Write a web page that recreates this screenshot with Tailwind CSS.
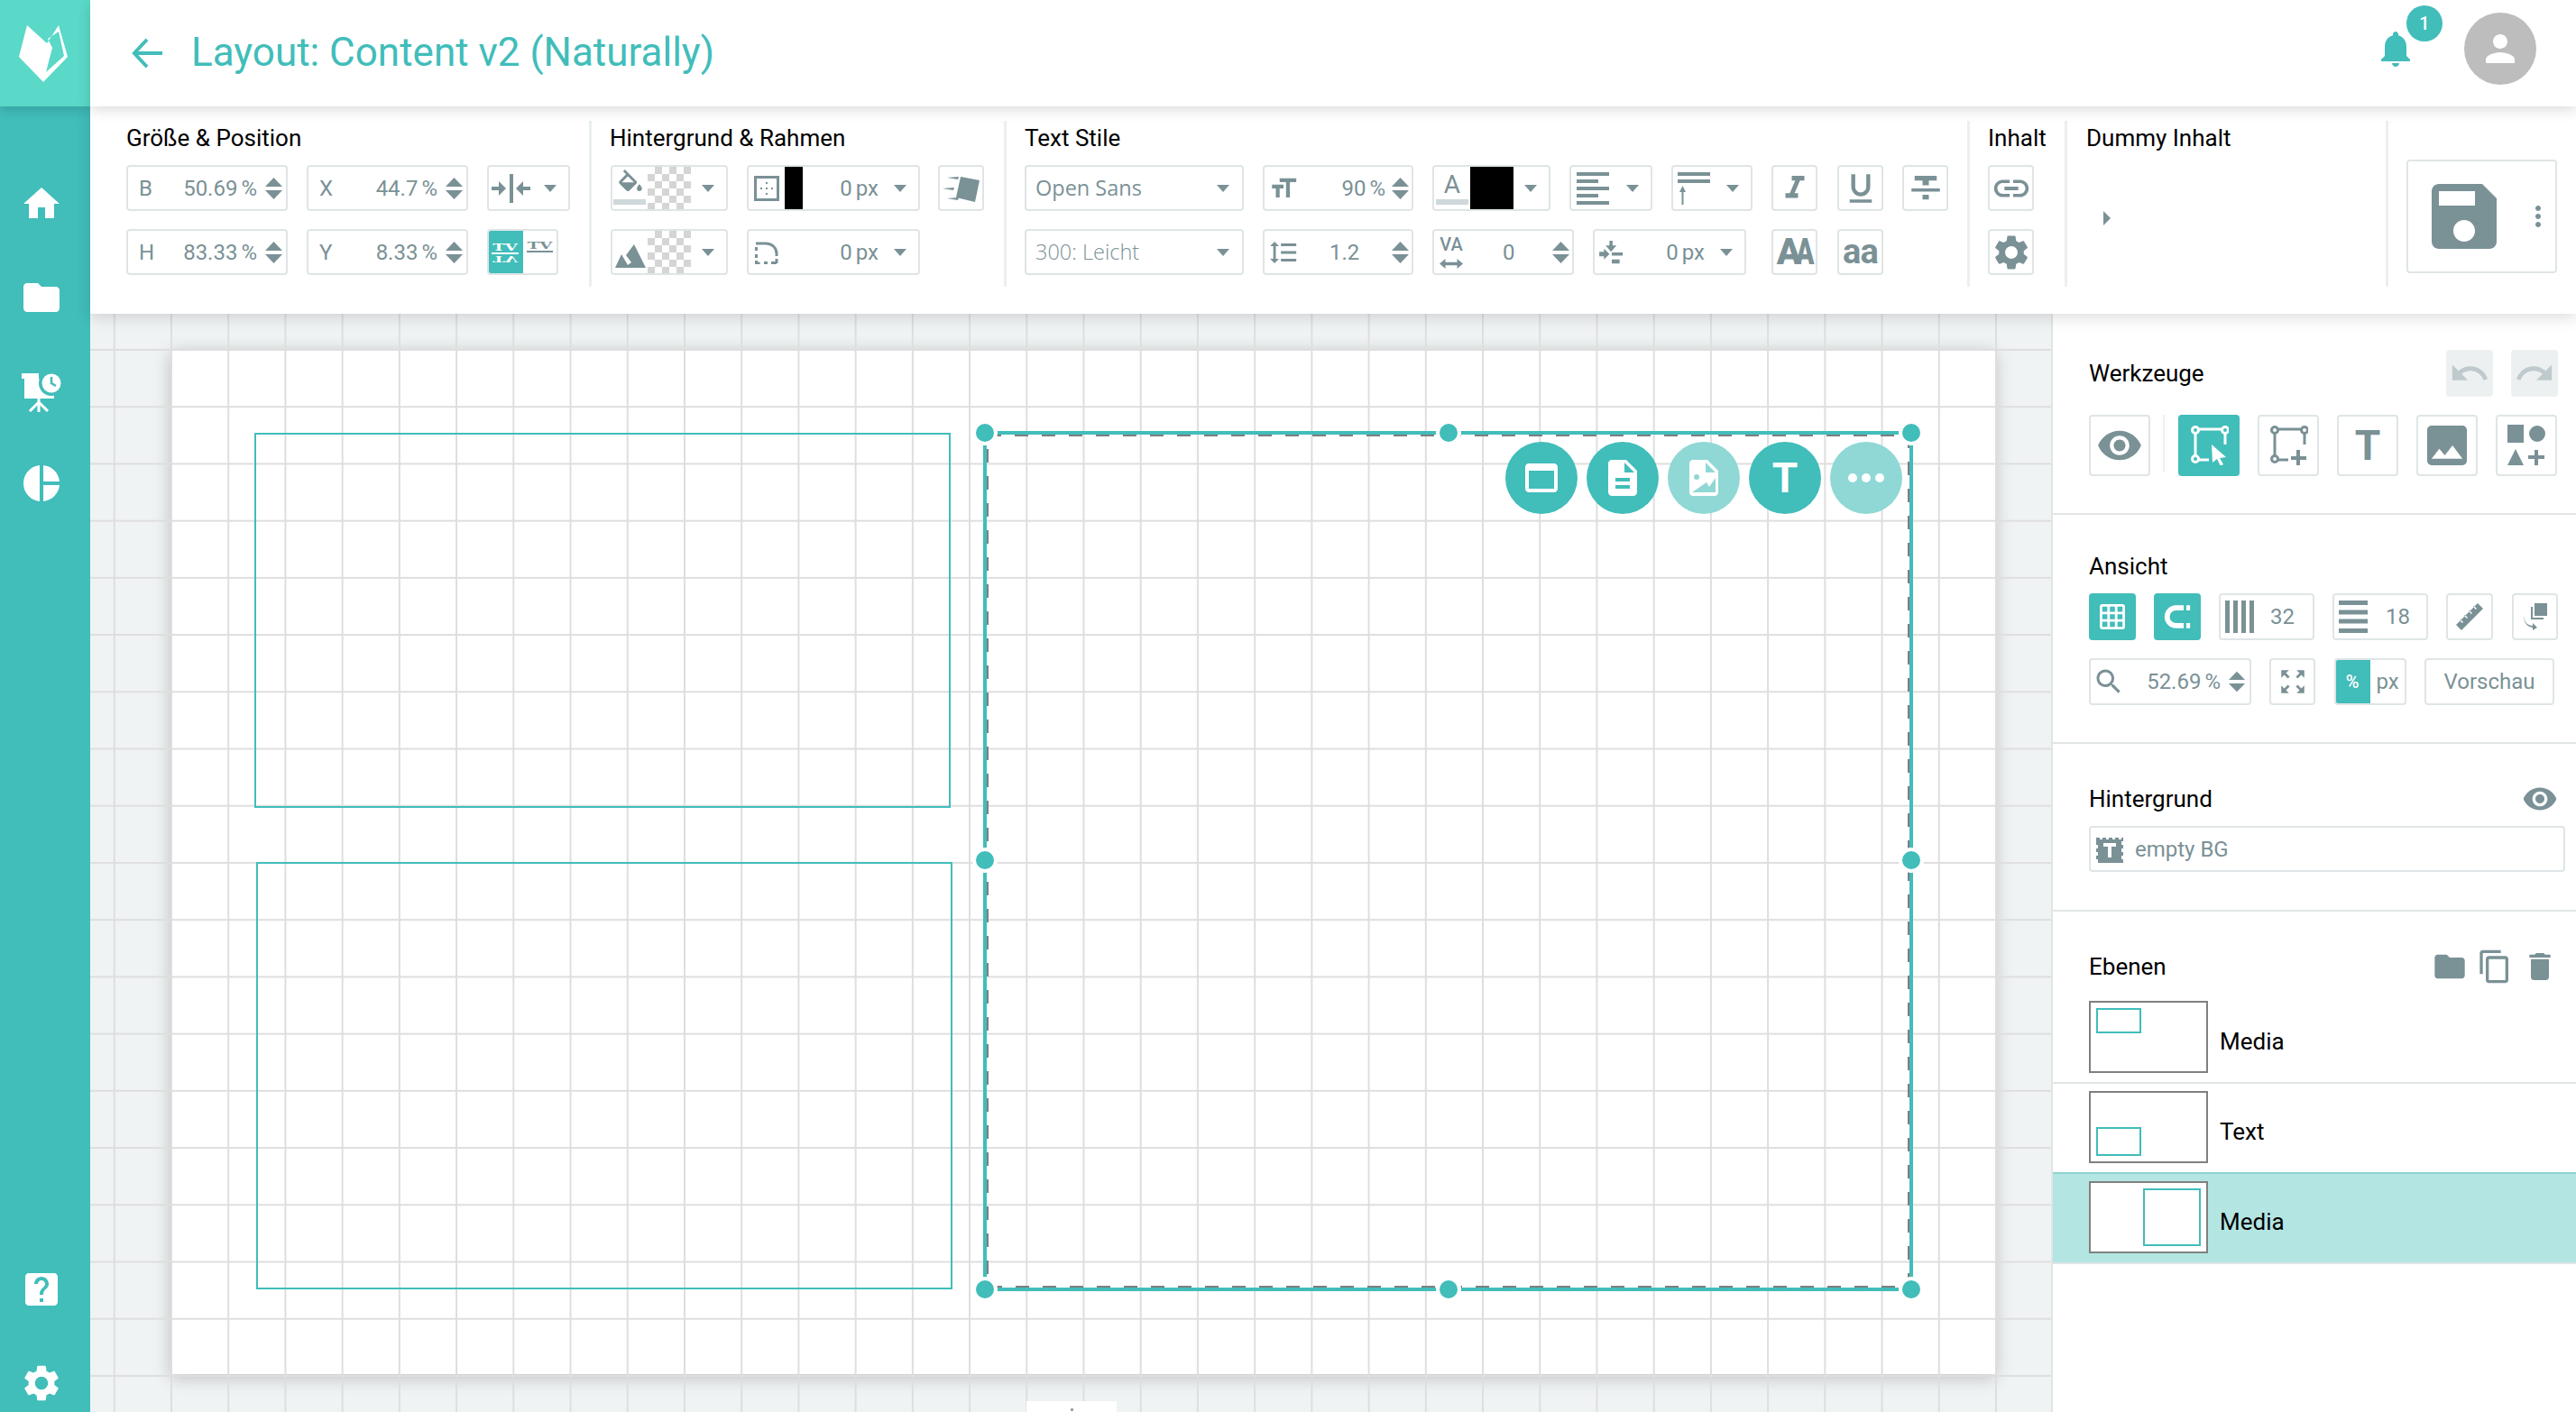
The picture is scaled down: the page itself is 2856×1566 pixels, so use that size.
<!DOCTYPE html>
<html lang="de">
<head>
<meta charset="UTF-8" />
<title>Layout: Content v2 (Naturally)</title>
<script src="https://cdn.jsdelivr.net/npm/@tailwindcss/browser@4"></script>
</head>
<body class="font-['Roboto',sans-serif] bg-white overflow-hidden">

<!-- icon sprite -->
<svg class="hidden">
	<symbol id="caret" viewBox="0 0 14 8"><path d="M0 0h14L7 8z" /></symbol>
	<symbol id="spin" viewBox="0 0 19 24"><path d="M9.500 0L19 10H0zM0 14h19L9.500 24z" /></symbol>
	<symbol id="gear" viewBox="0 0 24 24"><path d="M19.140 12.940c.04-.3.06-.61.06-.94 0-.32-.02-.64-.07-.94l2.030-1.580c.18-.14.23-.41.12-.61l-1.920-3.320c-.12-.22-.37-.29-.59-.22l-2.390.96c-.5-.38-1.030-.7-1.620-.94l-.36-2.540c-.04-.24-.24-.41-.48-.41h-3.840c-.24 0-.43.17-.47.41l-.36 2.540c-.59.24-1.130.57-1.620.94l-2.390-.96c-.22-.08-.47 0-.59.22L2.740 8.870c-.12.21-.08.47.12.61l2.030 1.580c-.05.3-.09.63-.09.94s.02.64.07.94l-2.030 1.580c-.18.14-.23.41-.12.61l1.920 3.320c.12.22.37.29.59.22l2.390-.96c.5.38 1.030.7 1.620.94l.36 2.540c.05.24.24.41.48.41h3.840c.24 0 .44-.17.47-.41l.36-2.540c.59-.24 1.130-.56 1.620-.94l2.390.96c.22.08.47 0 .59-.22l1.920-3.320c.12-.22.07-.47-.12-.61l-2.010-1.580zM12 15.600c-1.980 0-3.600-1.620-3.600-3.600s1.620-3.600 3.600-3.600 3.600 1.620 3.600 3.600-1.620 3.600-3.600 3.600z" /></symbol>
	<symbol id="eye" viewBox="0 0 24 24"><path d="M12 4.500C7 4.500 2.730 7.610 1 12c1.730 4.390 6 7.500 11 7.500s9.270-3.110 11-7.500c-1.730-4.390-6-7.500-11-7.500zM12 17c-2.760 0-5-2.240-5-5s2.240-5 5-5 5 2.240 5 5-2.240 5-5 5zm0-8c-1.660 0-3 1.340-3 3s1.340 3 3 3 3-1.340 3-3-1.340-3-3-3z" /></symbol>
	<symbol id="folder" viewBox="0 0 24 24"><path d="M10 4H4c-1.100 0-1.990.9-1.990 2L2 18c0 1.100.9 2 2 2h16c1.100 0 2-.9 2-2V8c0-1.100-.9-2-2-2h-8l-2-2z" /></symbol>
</svg>

<div class="flex w-[2856px] h-[1566px]">

	<!-- left nav -->
	<aside class="relative z-20 w-[100px] h-full flex flex-col items-start bg-[#41bdba] text-white">
		<div class="w-[100px] h-[118px] bg-[#5ad8c8] shadow-[0_4px_12px_rgba(0,0,0,0.15)] flex items-center">
			<svg class="ml-[21px] w-[54px] h-[63px]" viewBox="0 0 54 63" fill="#fff"><path fill-rule="evenodd" d="M9 0L31 20 44 0 54 35 27 63 0 35zM32 15L44 7 50 34 30 52 37 25z" /></svg>
		</div>
		<svg class="ml-[22px] mt-[84px] w-[48px] h-[48px]" viewBox="0 0 24 24" fill="currentColor"><path d="M10 20v-6h4v6h5v-8h3L12 3 2 12h3v8z" /></svg>
		<svg class="ml-[22px] mt-[56px] w-[48px] h-[48px] fill-current"><use href="#folder" /></svg>
		<svg class="ml-[24px] mt-[59px] w-[44px] h-[44px]" viewBox="0 0 44 44">
			<path fill="#fff" d="M0 1h19v6H0zM3 7h33v22H3z" />
			<circle cx="33" cy="12" r="14" fill="#41bdba" />
			<circle cx="33" cy="12" r="10.500" fill="#fff" />
			<path d="M33 5v7l5 3" fill="none" stroke="#41bdba" stroke-width="2.500" />
			<path d="M19 29v15M19 33L9 43M19 33l10 10" fill="none" stroke="#fff" stroke-width="3" />
		</svg>
		<svg class="ml-[22px] mt-[55px] w-[48px] h-[48px]" viewBox="0 0 24 24" fill="currentColor"><path d="M11 2v20c-5.070-.5-9-4.790-9-10s3.930-9.500 9-10zm2.030 0v8.990H22c-.47-4.740-4.240-8.520-8.970-8.990zm0 11.010V22c4.740-.47 8.500-4.250 8.970-8.990h-8.970z" /></svg>
		<svg class="ml-[22px] mt-auto w-[48px] h-[48px]" viewBox="0 0 24 24" fill="currentColor"><path d="M19 3H5c-1.110 0-2 .9-2 2v14c0 1.100.89 2 2 2h14c1.100 0 2-.9 2-2V5c0-1.100-.9-2-2-2zm-6 16h-2v-2h2v2zm2.070-7.750l-.9.92C13.450 12.900 13 13.500 13 15h-2v-.5c0-1.100.45-2.100 1.170-2.830l1.240-1.260c.37-.36.59-.86.59-1.410 0-1.100-.9-2-2-2s-2 .9-2 2H8c0-2.210 1.790-4 4-4s4 1.790 4 4c0 .88-.36 1.680-.93 2.250z" /></svg>
		<svg class="ml-[22px] mt-[56px] mb-[8px] w-[48px] h-[48px] fill-current"><use href="#gear" /></svg>
	</aside>

	<div class="flex flex-col w-[2756px] h-full">

		<!-- title bar -->
		<header class="relative z-30 h-[118px] bg-white shadow-[0_4px_14px_rgba(0,0,0,0.14)] flex items-center text-[#41bdba]">
			<svg class="ml-[46px] w-[34px] h-[34px]" viewBox="0 0 36 36" fill="none" stroke="currentColor" stroke-width="4"><path d="M36 18H3M18 2L3 18l15 16" /></svg>
			<h1 class="ml-[32px] text-[44px] leading-none mb-[2px]">Layout: Content v2 (Naturally)</h1>
			<div class="relative ml-auto mr-[44px] self-start mt-[14px] flex items-start">
				<svg class="w-[48px] h-[48px] mr-[52px] mt-[16px]" viewBox="0 0 24 24" fill="currentColor"><path d="M12 22c1.100 0 2-.9 2-2h-4c0 1.100.89 2 2 2zm6-6v-5c0-3.070-1.640-5.640-4.500-6.320V4c0-.83-.67-1.500-1.500-1.500s-1.500.67-1.500 1.500v.68C7.630 5.360 6 7.920 6 11v5l-2 2v1h16v-1l-2-2z" /></svg>
				<span class="absolute left-[36px] top-[-8px] w-[40px] h-[40px] rounded-full bg-[#41bdba] text-white text-[20px] font-medium flex items-center justify-center">1</span>
				<span class="w-[80px] h-[80px] rounded-full bg-[#bdbdbd] flex items-center justify-center">
					<svg class="w-[48px] h-[48px]" viewBox="0 0 24 24" fill="#fff"><path d="M12 12c2.210 0 4-1.790 4-4s-1.790-4-4-4-4 1.790-4 4 1.790 4 4 4zm0 2c-2.670 0-8 1.340-8 4v2h16v-2c0-2.660-5.330-4-8-4z" /></svg>
				</span>
			</div>
		</header>

		<!-- property toolbar -->
		<section class="relative z-20 h-[230px] bg-white shadow-[0_4px_16px_rgba(0,0,0,0.14)] flex items-start pt-[16px] text-[#7a9196] fill-[#7a9196]">

			<!-- size & position -->
			<div class="w-[556px] h-[184px] pl-[40px] border-r-[3px] border-[#ecefef]">
				<h2 class="text-[26px] leading-[38px] mb-[11px] text-black">Größe &amp; Position</h2>
				<div class="flex gap-[21px] text-[24px]">
					<div class="w-[179px] h-[51px] flex items-center pl-[12px] pr-[4px] border-2 border-[#dfe5e6] rounded-[4px]"><span>B</span><span class="ml-auto">50.69<span class="ml-[4px]">%</span></span><svg class="ml-[9px] w-[19px] h-[24px]"><use href="#spin" /></svg></div>
					<div class="w-[179px] h-[51px] flex items-center pl-[12px] pr-[4px] border-2 border-[#dfe5e6] rounded-[4px]"><span>X</span><span class="ml-auto">44.7<span class="ml-[4px]">%</span></span><svg class="ml-[9px] w-[19px] h-[24px]"><use href="#spin" /></svg></div>
					<div class="w-[92px] h-[51px] flex items-center pl-[3px] border-2 border-[#dfe5e6] rounded-[4px]">
						<svg class="w-[43px] h-[32px]" viewBox="0 0 43 32"><path d="M20 0h4v32h-4zM0 14h8V8l8 8-8 8v-6H0zM43 14h-8V8l-8 8 8 8v-6h8z" /></svg>
						<svg class="ml-[15px] w-[14px] h-[8px]"><use href="#caret" /></svg>
					</div>
				</div>
				<div class="flex gap-[21px] mt-[20px] text-[24px]">
					<div class="w-[179px] h-[51px] flex items-center pl-[12px] pr-[4px] border-2 border-[#dfe5e6] rounded-[4px]"><span>H</span><span class="ml-auto">83.33<span class="ml-[4px]">%</span></span><svg class="ml-[9px] w-[19px] h-[24px]"><use href="#spin" /></svg></div>
					<div class="w-[179px] h-[51px] flex items-center pl-[12px] pr-[4px] border-2 border-[#dfe5e6] rounded-[4px]"><span>Y</span><span class="ml-auto">8.33<span class="ml-[4px]">%</span></span><svg class="ml-[9px] w-[19px] h-[24px]"><use href="#spin" /></svg></div>
					<div class="w-[79px] h-[51px] flex rounded-[4px] overflow-hidden border-2 border-[#dfe5e6] font-['DejaVu_Serif',serif] font-bold text-[18px] leading-none">
						<span class="w-[40px] -m-[2px] mr-0 bg-[#41bdba] text-white flex flex-col items-center justify-center">
							<span class="h-[14px] w-[30px] flex items-end justify-center border-b-2 border-white"><span class="scale-y-[0.6] origin-bottom">TV</span></span>
							<span class="h-[10px] w-[30px] flex items-start justify-center"><span class="-scale-y-50 origin-center -mt-[4px]">TV</span></span>
						</span>
						<span class="flex-1 flex items-start justify-center pt-[8px]"><span class="h-[16px] w-[29px] flex items-end justify-center border-b-2 border-[#7a9196]"><span class="scale-y-[0.6] origin-bottom">TV</span></span></span>
					</div>
				</div>
			</div>

			<!-- background & border -->
			<div class="w-[460px] h-[184px] pl-[21px] border-r-[3px] border-[#ecefef]">
				<h2 class="-ml-px text-[26px] leading-[38px] mb-[11px] text-black">Hintergrund &amp; Rahmen</h2>
				<div class="flex text-[24px]">
					<div class="relative w-[130px] h-[51px] flex items-center border-2 border-[#dfe5e6] rounded-[4px]">
						<svg class="ml-[3px] w-[34px] h-[34px] mb-[8px]" viewBox="0 0 24 24"><path d="M16.560 8.940L7.620 0 6.210 1.410l2.380 2.380-5.150 5.150c-.59.59-.59 1.540 0 2.120l5.500 5.500c.29.29.68.44 1.060.44s.77-.15 1.060-.44l5.500-5.500c.59-.58.59-1.530 0-2.120zM5.210 10L10 5.210 14.790 10H5.210zM19 11.500s-2 2.170-2 3.500c0 1.100.9 2 2 2s2-.9 2-2c0-1.330-2-3.500-2-3.500z" /></svg>
						<span class="absolute left-[1px] bottom-[5px] w-[36px] h-[6px] bg-[#cfd8da]"></span>
						<span class="self-stretch ml-[2px] w-[48px] bg-[conic-gradient(#d5d5d5_25%,#fff_0_50%,#d5d5d5_0_75%,#fff_0)] bg-[size:16px_16px]"></span>
						<svg class="ml-[12px] w-[14px] h-[8px]"><use href="#caret" /></svg>
					</div>
					<div class="ml-[21px] w-[192px] h-[51px] flex items-center border-2 border-[#dfe5e6] rounded-[4px]">
						<svg class="ml-[6px] w-[28px] h-[28px]" viewBox="0 0 28 28"><path fill-rule="evenodd" d="M0 0h28v28H0zM3 3v22h22V3zM13 7h2v2h-2zM13 13h2v2h-2zM13 19h2v2h-2zM7 13h2v2H7zM19 13h2v2h-2z" /></svg>
						<span class="self-stretch ml-[6px] w-[20px] bg-black"></span>
						<span class="ml-auto">0<span class="ml-[4px]">px</span></span>
						<svg class="ml-[17px] mr-[13px] w-[14px] h-[8px]"><use href="#caret" /></svg>
					</div>
					<div class="ml-[20px] w-[51px] h-[51px] flex items-center justify-center border-2 border-[#dfe5e6] rounded-[4px]">
						<svg class="w-[44px] h-[34px]" viewBox="0 0 44 34"><path d="M21 4l21 4-5 24-21-5zM6 5l13-1-1 3zM1 17l13-1-1 3zM6 28l13-1-1 3z" /></svg>
					</div>
				</div>
				<div class="flex mt-[20px] text-[24px]">
					<div class="w-[130px] h-[51px] flex items-center border-2 border-[#dfe5e6] rounded-[4px]">
						<svg class="ml-[3px] w-[34px] h-[26px] mt-[8px]" viewBox="0 0 34 26"><path d="M21 0L12 12l6 8-4 3L7 11 0 26h34z" /></svg>
						<span class="self-stretch ml-[2px] w-[48px] bg-[conic-gradient(#d5d5d5_25%,#fff_0_50%,#d5d5d5_0_75%,#fff_0)] bg-[size:16px_16px]"></span>
						<svg class="ml-[12px] w-[14px] h-[8px]"><use href="#caret" /></svg>
					</div>
					<div class="ml-[21px] w-[192px] h-[51px] flex items-center border-2 border-[#dfe5e6] rounded-[4px]">
						<svg class="ml-[7px] w-[26px] h-[26px]" viewBox="0 0 26 26" fill="none" stroke="#7a9196" stroke-width="3"><path d="M1 3h11c7 0 12 5 12 11v3" /><path d="M1.500 7v4M1.500 15v4M1.500 22v3h4M10 24.500h4M18 24.500h6M24 20v5" /></svg>
						<span class="ml-auto">0<span class="ml-[4px]">px</span></span>
						<svg class="ml-[17px] mr-[13px] w-[14px] h-[8px]"><use href="#caret" /></svg>
					</div>
				</div>
			</div>

			<!-- text style -->
			<div class="w-[1068px] h-[184px] pl-[20px] border-r-[3px] border-[#ecefef]">
				<h2 class="text-[26px] leading-[38px] mb-[11px] text-black">Text Stile</h2>
				<div class="flex h-[51px] text-[24px]">
					<div class="w-[243px] flex items-center pl-[10px] border-2 border-[#dfe5e6] rounded-[4px] font-['Open_Sans',sans-serif] text-[23.500px]"><span>Open Sans</span><svg class="ml-auto mr-[14px] w-[14px] h-[8px]"><use href="#caret" /></svg></div>
					<div class="ml-[21px] w-[167px] flex items-center border-2 border-[#dfe5e6] rounded-[4px]">
						<svg class="ml-[4px] w-[34px] h-[36px]" viewBox="0 0 24 24"><path d="M9 4v3h5v12h3V7h5V4H9zm-6 8h3v7h3v-7h3V9H3v3z" /></svg>
						<span class="ml-auto">90<span class="ml-[4px]">%</span></span>
						<svg class="ml-[7px] mr-[3px] w-[19px] h-[24px]"><use href="#spin" /></svg>
					</div>
					<div class="relative ml-[21px] w-[131px] flex items-center border-2 border-[#dfe5e6] rounded-[4px]">
						<span class="w-[40px] text-center mb-[8px] text-[28px]">A</span>
						<span class="absolute left-[2px] bottom-[5px] w-[36px] h-[6px] bg-[#cfd8da]"></span>
						<span class="self-stretch w-[48px] bg-black"></span>
						<svg class="ml-[12px] w-[14px] h-[8px]"><use href="#caret" /></svg>
					</div>
					<div class="ml-[21px] w-[92px] flex items-center border-2 border-[#dfe5e6] rounded-[4px]">
						<svg class="ml-[6px] w-[36px] h-[36px]" viewBox="0 0 36 36"><path d="M0 0h36v4H0zM0 8h24v4H0zM0 16h36v4H0zM0 24h24v4H0zM0 32h36v4H0z" /></svg>
						<svg class="ml-[19px] w-[14px] h-[8px]"><use href="#caret" /></svg>
					</div>
					<div class="ml-[21px] w-[90px] flex items-center border-2 border-[#dfe5e6] rounded-[4px]">
						<svg class="ml-[5px] w-[36px] h-[36px]" viewBox="0 0 36 36"><path d="M0 0h36v4H0zM0 8h36v4H0zM2 22l3.500-7 3.500 7H6.500v14h-2V22z" /></svg>
						<svg class="ml-[18px] w-[14px] h-[8px]"><use href="#caret" /></svg>
					</div>
					<div class="ml-[21px] w-[51px] flex items-center justify-center border-2 border-[#dfe5e6] rounded-[4px]"><svg class="w-[42px] h-[42px]" viewBox="0 0 24 24"><path d="M10 4v3h2.210l-3.420 8H6v3h8v-3h-2.210l3.420-8H18V4z" /></svg></div>
					<div class="ml-[22px] w-[51px] flex items-center justify-center border-2 border-[#dfe5e6] rounded-[4px]"><svg class="w-[42px] h-[42px]" viewBox="0 0 24 24"><path d="M12 17c3.310 0 6-2.690 6-6V3h-2.500v8c0 1.930-1.570 3.500-3.500 3.500S8.500 12.930 8.500 11V3H6v8c0 3.310 2.690 6 6 6zm-7 2v2h14v-2H5z" /></svg></div>
					<div class="ml-[21px] w-[51px] flex items-center justify-center border-2 border-[#dfe5e6] rounded-[4px]"><svg class="w-[42px] h-[42px]" viewBox="0 0 24 24"><path d="M10 19h4v-3h-4v3zM5 4v3h5v3h4V7h5V4H5zM3 14h18v-2H3v2z" /></svg></div>
				</div>
				<div class="flex h-[51px] mt-[20px] text-[24px]">
					<div class="w-[243px] flex items-center pl-[10px] border-2 border-[#dfe5e6] rounded-[4px] font-['Open_Sans',sans-serif] font-light text-[23.500px]"><span>300: Leicht</span><svg class="ml-auto mr-[14px] w-[14px] h-[8px]"><use href="#caret" /></svg></div>
					<div class="ml-[21px] w-[167px] flex items-center border-2 border-[#dfe5e6] rounded-[4px]">
						<svg class="ml-[4px] w-[34px] h-[36px]" viewBox="0 0 24 24"><path d="M6 7h2.500L5 3.500 1.500 7H4v10H1.500L5 20.500 8.500 17H6V7zm4-2v2h12V5H10zm0 14h12v-2H10v2zm0-6h12v-2H10v2z" /></svg>
						<span class="ml-[34px]">1.2</span>
						<svg class="ml-auto mr-[3px] w-[19px] h-[24px]"><use href="#spin" /></svg>
					</div>
					<div class="ml-[21px] w-[157px] flex items-center border-2 border-[#dfe5e6] rounded-[4px]">
						<span class="relative ml-[5px] w-[28px] h-[38px] text-[20px] leading-[20px] font-medium text-center">VA
							<svg class="absolute left-0 bottom-0 w-[28px] h-[13px]" viewBox="0 0 28 14"><path d="M0 7l7-6v4h14V1l7 6-7 6V9H7v4z" /></svg>
						</span>
						<span class="ml-[43px]">0</span>
						<svg class="ml-auto mr-[3px] w-[19px] h-[24px]"><use href="#spin" /></svg>
					</div>
					<div class="ml-[21px] w-[170px] flex items-center border-2 border-[#dfe5e6] rounded-[4px]">
						<svg class="ml-[5px] w-[28px] h-[26px]" viewBox="0 0 32 30"><path d="M13 0h4v6h5l-7 8-7-8h5zM0 14h6v-4l7 7-7 7v-4H0zM16 15h14v4H16zM16 24h10v5H16z" /></svg>
						<span class="ml-auto">0<span class="ml-[4px]">px</span></span>
						<svg class="ml-[17px] mr-[13px] w-[14px] h-[8px]"><use href="#caret" /></svg>
					</div>
					<div class="ml-[28px] w-[51px] flex items-center justify-center border-2 border-[#dfe5e6] rounded-[4px] font-black text-[40px] tracking-[-0.14em] leading-none"><span>A</span><span class="scale-x-75 origin-left w-[18px]">A</span></div>
					<div class="ml-[22px] w-[51px] flex items-center justify-center border-2 border-[#dfe5e6] rounded-[4px] font-bold text-[38px] tracking-[-0.02em] leading-none pb-[2px]">aa</div>
				</div>
			</div>

			<!-- content -->
			<div class="w-[108px] h-[184px] pl-[20px] border-r-[3px] border-[#ecefef]">
				<h2 class="text-[26px] leading-[38px] mb-[11px] text-black">Inhalt</h2>
				<div class="w-[51px] h-[51px] flex items-center justify-center border-2 border-[#dfe5e6] rounded-[4px]"><svg class="w-[46px] h-[46px]" viewBox="0 0 24 24"><path d="M3.900 12c0-1.710 1.390-3.100 3.100-3.100h4V7H7c-2.760 0-5 2.240-5 5s2.240 5 5 5h4v-1.900H7c-1.710 0-3.100-1.390-3.100-3.100zM8 13h8v-2H8v2zm9-6h-4v1.900h4c1.710 0 3.100 1.390 3.100 3.100s-1.390 3.100-3.100 3.100h-4V17h4c2.760 0 5-2.240 5-5s-2.240-5-5-5z" /></svg></div>
				<div class="mt-[20px] w-[51px] h-[51px] flex items-center justify-center border-2 border-[#dfe5e6] rounded-[4px]"><svg class="w-[46px] h-[46px]"><use href="#gear" /></svg></div>
			</div>

			<!-- dummy content -->
			<div class="w-[356px] h-[184px] pl-[22px] border-r-[3px] border-[#ecefef]">
				<h2 class="-ml-px text-[26px] leading-[38px] mb-[11px] text-black">Dummy Inhalt</h2>
				<svg class="ml-[18px] mt-[62px] w-[8px] h-[16px]" viewBox="0 0 8 16"><path d="M0 0l8 8-8 8z" /></svg>
			</div>

			<!-- save -->
			<div class="w-[167px] h-[126px] ml-[20px] mt-[43px] flex items-center border-2 border-[#dfe5e6] rounded-[4px]">
				<svg class="ml-[14px] w-[96px] h-[96px]" viewBox="0 0 24 24"><path d="M17 3H5c-1.110 0-2 .9-2 2v14c0 1.100.89 2 2 2h14c1.100 0 2-.9 2-2V7l-4-4zm-5 16c-1.660 0-3-1.340-3-3s1.340-3 3-3 3 1.340 3 3-1.340 3-3 3zm3-10H5V5h10v4z" /></svg>
				<svg class="ml-[16px] w-[36px] h-[36px]" viewBox="0 0 24 24"><path d="M12 8c1.100 0 2-.9 2-2s-.9-2-2-2-2 .9-2 2 .9 2 2 2zm0 2c-1.100 0-2 .9-2 2s.9 2 2 2 2-.9 2-2-.9-2-2-2zm0 6c-1.100 0-2 .9-2 2s.9 2 2 2 2-.9 2-2-.9-2-2-2z" /></svg>
			</div>
		</section>

		<div class="flex flex-1 min-h-0">

			<!-- canvas -->
			<main class="relative w-[2174px] h-[1218px] overflow-hidden bg-[#f0f3f4]">
				<div class="absolute left-[89px] top-[39px] w-[2023px] h-[1137px] bg-white shadow-[0_4px_18px_rgba(0,0,0,0.22)]"></div>
				<div class="absolute inset-0 bg-[linear-gradient(to_right,#dedede_2px,transparent_2px),linear-gradient(to_bottom,#dedede_2px,transparent_2px)] bg-[size:63.22px_63.22px] bg-[position:25.8px_39px]"></div>

				<div class="absolute left-[182px] top-[132px] w-[772px] h-[416px] border-2 border-[#41bdba]"></div>
				<div class="absolute left-[184px] top-[608px] w-[772px] h-[474px] border-2 border-[#41bdba]"></div>

				<!-- selected element -->
				<div class="absolute left-[990px] top-[130px] w-[1031px] h-[954px] border-4 border-[#41bdba]">
					<svg class="absolute left-0 top-0 w-[1023px] h-[946px]" fill="none" stroke="#7e7e7e" stroke-width="2" stroke-dasharray="15 15"><rect x="1" y="1" width="1021" height="944" /></svg>
					<span class="absolute left-[-16px] top-[-16px] w-[28px] h-[28px] rounded-full bg-[#41bdba] border-4 border-white"></span>
					<span class="absolute left-[498px] top-[-16px] w-[28px] h-[28px] rounded-full bg-[#41bdba] border-4 border-white"></span>
					<span class="absolute right-[-16px] top-[-16px] w-[28px] h-[28px] rounded-full bg-[#41bdba] border-4 border-white"></span>
					<span class="absolute left-[-16px] top-[458px] w-[28px] h-[28px] rounded-full bg-[#41bdba] border-4 border-white"></span>
					<span class="absolute right-[-16px] top-[458px] w-[28px] h-[28px] rounded-full bg-[#41bdba] border-4 border-white"></span>
					<span class="absolute left-[-16px] bottom-[-16px] w-[28px] h-[28px] rounded-full bg-[#41bdba] border-4 border-white"></span>
					<span class="absolute left-[498px] bottom-[-16px] w-[28px] h-[28px] rounded-full bg-[#41bdba] border-4 border-white"></span>
					<span class="absolute right-[-16px] bottom-[-16px] w-[28px] h-[28px] rounded-full bg-[#41bdba] border-4 border-white"></span>

					<div class="absolute right-[8px] top-[8px] flex gap-[10px]">
						<span class="w-[80px] h-[80px] rounded-full bg-[#41bdba] flex items-center justify-center"><svg class="w-[48px] h-[48px]" viewBox="0 0 24 24" fill="#fff"><path d="M19 4H5c-1.110 0-2 .9-2 2v12c0 1.100.89 2 2 2h14c1.100 0 2-.9 2-2V6c0-1.100-.89-2-2-2zm0 14H5V8h14v10z" /></svg></span>
						<span class="w-[80px] h-[80px] rounded-full bg-[#41bdba] flex items-center justify-center"><svg class="w-[48px] h-[48px]" viewBox="0 0 24 24" fill="#fff"><path d="M14 2H6c-1.100 0-1.990.9-1.990 2L4 20c0 1.100.89 2 1.990 2H18c1.100 0 2-.9 2-2V8l-6-6zm2 16H8v-2h8v2zm0-4H8v-2h8v2zm-3-5V3.500L18.500 9H13z" /></svg></span>
						<span class="w-[80px] h-[80px] rounded-full bg-[#8fd8d5] flex items-center justify-center"><svg class="w-[48px] h-[48px]" viewBox="0 0 24 24" fill="#fff"><path fill-rule="evenodd" d="M6 2h8l6 6v12c0 1.100-.9 2-2 2H6c-1.100 0-2-.9-2-2V4c0-1.100.9-2 2-2zM13 3.500V9h5.500zM5.500 20h13v-8l-3.500 5-1.500-2.500zM8 10a1.500 1.500 0 1 0 0 3 1.500 1.500 0 0 0 0-3z" /></svg></span>
						<span class="w-[80px] h-[80px] rounded-full bg-[#41bdba] text-white text-[46px] font-bold flex items-center justify-center leading-none">T</span>
						<span class="w-[80px] h-[80px] rounded-full bg-[#8fd8d5] flex items-center justify-center gap-[5px]"><span class="w-[10px] h-[10px] rounded-full bg-white"></span><span class="w-[10px] h-[10px] rounded-full bg-white"></span><span class="w-[10px] h-[10px] rounded-full bg-white"></span></span>
					</div>
				</div>

				<div class="absolute left-[1038px] top-[1206px] w-[100px] h-[12px] bg-white flex justify-center pt-[8px]"><span class="w-[3px] h-[3px] bg-[#9aa5a8]"></span></div>
			</main>

			<!-- right panel -->
			<aside class="w-[582px] h-[1218px] bg-white border-l-2 border-[#e1e5e6] text-[#7a9196] fill-[#7a9196]">
				<div class="h-[223px] pl-[40px] pt-[40px] border-b-2 border-[#e1e5e6]">
					<div class="flex items-center h-[52px] w-[520px]">
						<h2 class="text-[26px] text-black">Werkzeuge</h2>
						<span class="ml-auto w-[52px] h-[52px] rounded-[4px] bg-[#edf0f1] flex items-center justify-center"><svg class="w-[46px] h-[46px] fill-[#bfcacd]" viewBox="0 0 24 24"><path d="M12.500 8c-2.650 0-5.050.99-6.900 2.600L2 7v9h9l-3.620-3.620c1.390-1.160 3.160-1.880 5.120-1.880 3.540 0 6.550 2.310 7.600 5.500l2.370-.78C21.080 11.030 17.150 8 12.500 8z" /></svg></span>
						<span class="ml-[20px] w-[52px] h-[52px] rounded-[4px] bg-[#edf0f1] flex items-center justify-center"><svg class="w-[46px] h-[46px] fill-[#bfcacd]" viewBox="0 0 24 24"><path d="M18.400 10.600C16.550 8.990 14.150 8 11.500 8c-4.650 0-8.580 3.030-9.960 7.220L3.900 16c1.050-3.190 4.050-5.500 7.600-5.500 1.950 0 3.730.72 5.120 1.880L13 16h9V7l-3.600 3.600z" /></svg></span>
					</div>
					<div class="flex items-start mt-[20px]">
						<span class="w-[68px] h-[68px] flex items-center justify-center border-2 border-[#dfe5e6] rounded-[4px]"><svg class="w-[52px] h-[52px]"><use href="#eye" /></svg></span>
						<span class="ml-[14px] w-[2px] h-[64px] bg-[#edf0f1]"></span>
						<span class="ml-[15px] w-[68px] h-[68px] flex items-center justify-center rounded-[4px] bg-[#41bdba]">
							<svg class="w-[44px] h-[44px]" viewBox="0 0 44 44" fill="none" stroke="#fff" stroke-width="3"><path d="M7 9v24M11 4h26M40 9v12M11 38h11" /><circle cx="7" cy="5" r="3.500" /><circle cx="40" cy="5" r="3.500" /><circle cx="7" cy="37" r="3.500" /><path fill="#fff" stroke="none" d="M25 21l16 14-7 1 4 7-3 2-4-8-5 4z" /></svg>
						</span>
						<span class="ml-[20px] w-[68px] h-[68px] flex items-center justify-center border-2 border-[#dfe5e6] rounded-[4px]">
							<svg class="w-[44px] h-[44px]" viewBox="0 0 44 44" fill="none" stroke="#7a9196" stroke-width="3"><path d="M7 9v24M11 4h26M40 9v12M11 38h11" /><circle cx="7" cy="5" r="3.500" /><circle cx="40" cy="5" r="3.500" /><circle cx="7" cy="37" r="3.500" /><path stroke-width="4" d="M33 27v17M25 36h17" /></svg>
						</span>
						<span class="ml-[20px] w-[68px] h-[68px] flex items-center justify-center border-2 border-[#dfe5e6] rounded-[4px] font-bold text-[46px] leading-none">T</span>
						<span class="ml-[20px] w-[68px] h-[68px] flex items-center justify-center border-2 border-[#dfe5e6] rounded-[4px]"><svg class="w-[44px] h-[44px]" viewBox="3 3 18 18"><path d="M21 19V5c0-1.100-.9-2-2-2H5c-1.100 0-2 .9-2 2v14c0 1.100.9 2 2 2h14c1.100 0 2-.9 2-2zM8.500 13.500l2.500 3.010L14.500 12l4.500 6H5l3.500-4.500z" /></svg></span>
						<span class="ml-[20px] w-[68px] h-[68px] flex items-center justify-center border-2 border-[#dfe5e6] rounded-[4px]"><svg class="w-[42px] h-[46px]" viewBox="0 0 42 46"><path d="M0 0h18v20H0zM24 10a9 9 0 1 0 18 0 9 9 0 0 0-18 0zM9 27l9 18H0zM30 28h4v6h7v4h-7v7h-4v-7h-7v-4h7z" /></svg></span>
					</div>
				</div>

				<div class="h-[254px] pl-[40px] pt-[38px] border-b-2 border-[#e1e5e6]">
					<h2 class="text-[26px] leading-[38px] mb-[11px] text-black">Ansicht</h2>
					<div class="flex h-[52px] text-[24px]">
						<span class="w-[52px] rounded-[4px] bg-[#41bdba] flex items-center justify-center"><svg class="w-[28px] h-[28px] fill-white" viewBox="2 2 20 20"><path d="M20 2H4c-1.100 0-2 .9-2 2v16c0 1.100.9 2 2 2h16c1.100 0 2-.9 2-2V4c0-1.100-.9-2-2-2zM8 20H4v-4h4v4zm0-6H4v-4h4v4zm0-6H4V4h4v4zm6 12h-4v-4h4v4zm0-6h-4v-4h4v4zm0-6h-4V4h4v4zm6 12h-4v-4h4v4zm0-6h-4v-4h4v4zm0-6h-4V4h4v4z" /></svg></span>
						<span class="ml-[20px] w-[52px] rounded-[4px] bg-[#41bdba] flex items-center justify-center"><svg class="w-[34px] h-[34px] fill-white rotate-90" viewBox="0 0 24 24"><path d="M3 7v6a9 9 0 0 0 9 9 9 9 0 0 0 9-9V7h-4v6a5 5 0 0 1-5 5 5 5 0 0 1-5-5V7m10-2h4V2h-4M3 5h4V2H3" /></svg></span>
						<span class="ml-[20px] w-[106px] flex items-center border-2 border-[#dfe5e6] rounded-[4px]">
							<svg class="ml-[5px] w-[32px] h-[36px]" viewBox="0 0 32 36"><path d="M0 0h5v36H0zM9 0h5v36H9zM18 0h5v36h-5zM27 0h5v36h-5z" /></svg>
							<span class="ml-[18px]">32</span>
						</span>
						<span class="ml-[20px] w-[106px] flex items-center border-2 border-[#dfe5e6] rounded-[4px]">
							<svg class="ml-[5px] w-[32px] h-[36px]" viewBox="0 0 32 36"><path d="M0 0h32v5H0zM0 10.500h32v5H0zM0 20.500h32v5H0zM0 31h32v5H0z" /></svg>
							<span class="ml-[20px]">18</span>
						</span>
						<span class="ml-[20px] w-[52px] flex items-center justify-center border-2 border-[#dfe5e6] rounded-[4px]"><svg class="w-[30px] h-[30px]" viewBox="0 0 30 30"><path fill-rule="evenodd" d="M24 0l6 6L6 30l-6-6zM5 18l-1 1 3 3 1-1zM10 13l-1 1 3 3 1-1zM15 8l-1 1 3 3 1-1zM20 3l-1 1 3 3 1-1z" /></svg></span>
						<span class="ml-[21px] w-[51px] flex items-center justify-center border-2 border-[#dfe5e6] rounded-[4px]"><svg class="w-[26px] h-[30px]" viewBox="0 0 26 30"><path d="M12 0h14v14H12zM8 4h2v12h12v2H8z" /><path d="M1 14c-1 6 2 10 9 11v-3l5 5-5 3v-3C3 26-1 20 1 14z" /></svg></span>
					</div>
					<div class="flex h-[52px] mt-[20px] text-[24px]">
						<span class="w-[180px] flex items-center border-2 border-[#dfe5e6] rounded-[4px]">
							<svg class="ml-[2px] w-[36px] h-[36px]" viewBox="0 0 24 24"><path d="M15.500 14h-.79l-.28-.27C15.410 12.590 16 11.110 16 9.500 16 5.910 13.090 3 9.500 3S3 5.910 3 9.500 5.910 16 9.500 16c1.610 0 3.090-.59 4.230-1.570l.27.28v.79l5 4.990L20.490 19l-4.990-5zm-6 0C7.010 14 5 11.990 5 9.500S7.010 5 9.500 5 14 7.010 14 9.500 11.990 14 9.500 14z" /></svg>
							<span class="ml-auto">52.69<span class="ml-[4px]">%</span></span>
							<svg class="ml-[9px] mr-[5px] w-[18px] h-[24px]"><use href="#spin" /></svg>
						</span>
						<span class="ml-[20px] w-[51px] flex items-center justify-center border-2 border-[#dfe5e6] rounded-[4px]"><svg class="w-[34px] h-[34px]" viewBox="0 0 24 24"><path d="M15 3l2.300 2.300-2.890 2.870 1.420 1.420L18.700 6.700 21 9V3h-6zM3 9l2.300-2.300 2.870 2.890 1.420-1.420L6.700 5.300 9 3H3v6zm6 12l-2.300-2.300 2.890-2.870-1.420-1.420L5.300 17.300 3 15v6h6zm12-6l-2.300 2.300-2.870-2.890-1.420 1.420 2.890 2.870L15 21h6v-6z" /></svg></span>
						<span class="ml-[21px] w-[80px] flex border-2 border-[#dfe5e6] rounded-[4px] overflow-hidden">
							<span class="w-[40px] -m-[2px] mr-0 bg-[#41bdba] text-white text-[20px] font-medium flex items-center justify-center">%</span>
							<span class="flex-1 flex items-center justify-center">px</span>
						</span>
						<span class="ml-[20px] w-[144px] flex items-center justify-center border-2 border-[#dfe5e6] rounded-[4px]">Vorschau</span>
					</div>
				</div>

				<div class="h-[186px] pl-[40px] pt-[42px] border-b-2 border-[#e1e5e6]">
					<div class="flex items-center h-[38px] mb-[11px] w-[520px]">
						<h2 class="text-[26px] text-black">Hintergrund</h2>
						<svg class="ml-auto w-[40px] h-[40px]"><use href="#eye" /></svg>
					</div>
					<div class="w-[528px] h-[51px] flex items-center border-2 border-[#dfe5e6] rounded-[4px] text-[24px]">
						<svg class="ml-[6px] w-[30px] h-[30px]" viewBox="0 0 30 30"><path fill-rule="evenodd" d="M0 2h4v2h3V2h4v2h3V2h4v2h3V2h4v2h3V2h2v4h-2v4h2v4h-2v4h2v4h-2v4h2v4H2v-4H0v-4h2v-4H0v-4h2v-4H0zM8 8v4h5v12h4V12h5V8z" /></svg>
						<span class="ml-[13px]">empty BG</span>
					</div>
				</div>

				<div class="pt-[42px]">
					<div class="flex items-center h-[38px] mb-[9px] pl-[40px]">
						<h2 class="text-[26px] text-black">Ebenen</h2>
						<div class="ml-auto mr-[20px] flex gap-[10px]">
							<svg class="w-[40px] h-[40px]"><use href="#folder" /></svg>
							<svg class="w-[40px] h-[40px]" viewBox="0 0 24 24"><path d="M16 1H4c-1.100 0-2 .9-2 2v14h2V3h12V1zm3 4H8c-1.100 0-2 .9-2 2v14c0 1.100.9 2 2 2h11c1.100 0 2-.9 2-2V7c0-1.100-.9-2-2-2zm0 16H8V7h11v14z" /></svg>
							<svg class="w-[40px] h-[40px]" viewBox="0 0 24 24"><path d="M6 19c0 1.100.9 2 2 2h8c1.100 0 2-.9 2-2V7H6v12zM19 4h-3.500l-1-1h-5l-1 1H5v2h14V4z" /></svg>
						</div>
					</div>
					<div class="h-[102px] pl-[40px] pt-[10px] flex items-start border-b-2 border-[#dfe5e6] text-black text-[26px]">
						<span class="relative w-[132px] h-[80px] bg-white border-2 border-[#808080]"><span class="absolute left-[6px] top-[6px] w-[50px] h-[28px] border-2 border-[#41bdba]"></span></span>
						<span class="ml-[13px] mt-[24px] leading-[42px]">Media</span>
					</div>
					<div class="h-[98px] pl-[40px] pt-[8px] flex items-start text-black text-[26px]">
						<span class="relative w-[132px] h-[80px] bg-white border-2 border-[#808080]"><span class="absolute left-[6px] top-[38px] w-[50px] h-[32px] border-2 border-[#41bdba]"></span></span>
						<span class="ml-[13px] mt-[24px] leading-[42px]">Text</span>
					</div>
					<div class="h-[102px] pl-[40px] pt-[8px] flex items-start border-t-2 border-b-2 border-t-[#8fd3d0] border-b-[#dfe5e6] bg-[#b3e5e2] text-black text-[26px]">
						<span class="relative w-[132px] h-[80px] bg-white border-2 border-[#808080]"><span class="absolute left-[58px] top-[6px] w-[64px] h-[64px] border-2 border-[#41bdba]"></span></span>
						<span class="ml-[13px] mt-[24px] leading-[42px]">Media</span>
					</div>
				</div>
			</aside>
		</div>
	</div>
</div>
</body>
</html>
